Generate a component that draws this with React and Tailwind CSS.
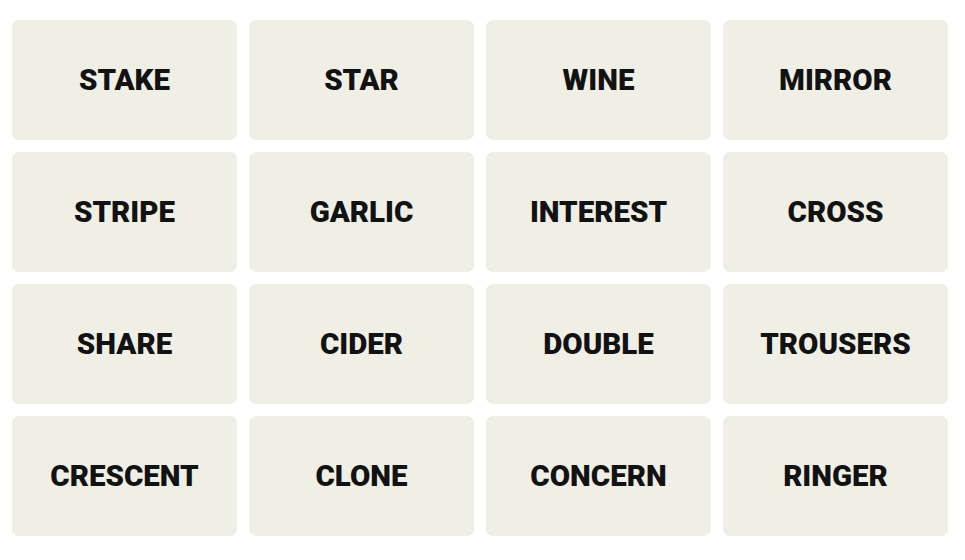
const words = [
  "STAKE","STAR","WINE","MIRROR",
  "STRIPE","GARLIC","INTEREST","CROSS",
  "SHARE","CIDER","DOUBLE","TROUSERS",
  "CRESCENT","CLONE","CONCERN","RINGER",
];

export default function App() {
  return (
    <div className="w-[965px] h-[560px] bg-white pl-[12px] pt-[20px]">
      <div className="grid grid-cols-[repeat(4,225px)] grid-rows-[repeat(4,120px)] gap-[12px]">
        {words.map((w) => (
          <div
            key={w}
            className="bg-[#efefe6] rounded-[7px] flex items-center justify-center text-[#121212] font-black text-[29.5px] uppercase"
            style={{ fontFamily: "Roboto, 'Liberation Sans', sans-serif" }}
          >
            {w}
          </div>
        ))}
      </div>
    </div>
  );
}
